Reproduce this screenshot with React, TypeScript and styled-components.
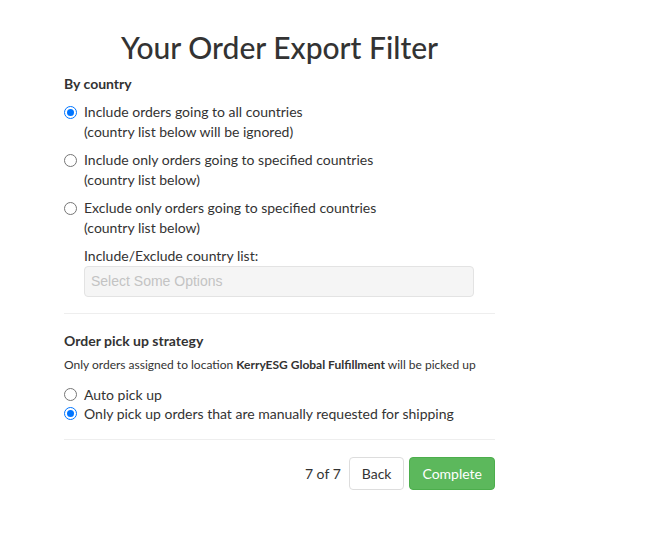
import React from "react";
import styled, { createGlobalStyle } from "styled-components";

const Global = createGlobalStyle`
  html, body { margin: 0; padding: 0; background: #fff; }
  body {
    font-family: "Lato", "Liberation Sans", sans-serif;
    font-size: 14px;
    line-height: 1.42857;
    color: #333;
  }
  * { box-sizing: border-box; }
`;

const Page = styled.div`
  width: 431px;
  margin: 0 0 0 64px;
  padding-top: 31px;
`;

const Title = styled.h2`
  margin: 0 0 10px;
  text-align: center;
  font-size: 30px;
  font-weight: 500;
  line-height: 1.1;
  color: #333;
`;

const SectionTitle = styled.div`
  font-weight: 700;
  font-size: 14px;
  margin-bottom: 8px;
`;

const Option = styled.label<{ $gap?: number; $lh?: number }>`
  display: flex;
  align-items: flex-start;
  gap: 7px;
  margin-bottom: ${(p) => p.$gap ?? 8}px;
  line-height: ${(p) => p.$lh ?? 20}px;
  cursor: pointer;
`;

const Radio = styled.span<{ $checked?: boolean; $top?: number }>`
  flex: none;
  width: 13px;
  height: 13px;
  margin-top: ${(p) => p.$top ?? 4}px;
  border-radius: 50%;
  border: 1px solid ${(p) => (p.$checked ? "#0075ff" : "#767676")};
  display: flex;
  align-items: center;
  justify-content: center;
  &::after {
    content: "";
    width: 7px;
    height: 7px;
    border-radius: 50%;
    background: ${(p) => (p.$checked ? "#0075ff" : "transparent")};
  }
`;

const OptionText = styled.div``;

const Indent = styled.div`
  padding-left: 20px;
  margin-top: 8px;
  width: 410px;
`;

const FieldLabel = styled.div`
  margin-bottom: 0;
`;

const FakeSelect = styled.div`
  height: 31px;
  border: 1px solid #e3e3e3;
  border-radius: 4px;
  background: #f5f5f5;
  padding: 5px 6px;
  font-family: "Liberation Sans", Arial, sans-serif;
  font-size: 14px;
  line-height: 18px;
  color: #c3c3c3;
`;

const Divider = styled.hr<{ $after?: number }>`
  border: 0;
  border-top: 1px solid #eee;
  margin: 16px 0 ${(p) => p.$after ?? 17}px;
`;

const Note = styled.div`
  font-size: 12px;
  margin-top: -3px;
  margin-bottom: 12px;
  b { font-weight: 700; }
`;

const Footer = styled.div`
  display: flex;
  justify-content: flex-end;
  align-items: center;
  gap: 5px;
`;

const Step = styled.span`
  margin-right: 3px;
`;

const Button = styled.button<{ $primary?: boolean }>`
  font-family: inherit;
  font-size: 14px;
  height: 33px;
  padding: 0 12px;
  border-radius: 4px;
  border: 1px solid ${(p) => (p.$primary ? "#4cae4c" : "#ddd")};
  background: ${(p) => (p.$primary ? "#5cb85c" : "#fff")};
  color: ${(p) => (p.$primary ? "#fff" : "#333")};
  cursor: pointer;
`;

export default function App() {
  return (
    <>
      <Global />
      <Page>
        <Title>Your Order Export Filter</Title>
        <SectionTitle>By country</SectionTitle>
        <Option>
          <Radio $checked />
          <OptionText>
            Include orders going to all countries
            <br />
            (country list below will be ignored)
          </OptionText>
        </Option>
        <Option>
          <Radio />
          <OptionText>
            Include only orders going to specified countries
            <br />
            (country list below)
          </OptionText>
        </Option>
        <Option $gap={0}>
          <Radio />
          <OptionText>
            Exclude only orders going to specified countries
            <br />
            (country list below)
          </OptionText>
        </Option>
        <Indent>
          <FieldLabel>Include/Exclude country list:</FieldLabel>
          <FakeSelect>Select Some Options</FakeSelect>
        </Indent>
        <Divider />
        <SectionTitle>Order pick up strategy</SectionTitle>
        <Note>
          Only orders assigned to location <b>KerryESG Global Fulfillment</b> will be picked up
        </Note>
        <Option $gap={0} $lh={19}>
          <Radio $top={3} />
          <OptionText>Auto pick up</OptionText>
        </Option>
        <Option $gap={0} $lh={19}>
          <Radio $checked $top={3} />
          <OptionText>Only pick up orders that are manually requested for shipping</OptionText>
        </Option>
        <Divider $after={17} />
        <Footer>
          <Step>7 of 7</Step>
          <Button>Back</Button>
          <Button $primary>Complete</Button>
        </Footer>
      </Page>
    </>
  );
}
